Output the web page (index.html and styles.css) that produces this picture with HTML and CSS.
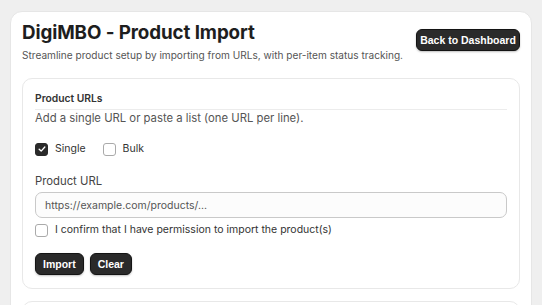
FILE: index.html
```html
<!DOCTYPE html>
<html>
<head>
    <meta charset="UTF-8">
    <title>DigiMBO - Product Import</title>
    <link rel="stylesheet" href="styles.css">
</head>
<body>
	<div class="page">
		<div class="header">
			<div class="titles">
				<h1>DigiMBO - Product Import</h1>
				<p class="sub">Streamline product setup by importing from URLs, with per-item status tracking.</p>
			</div>
			<button class="btn btn-back">Back to Dashboard</button>
		</div>
		<div class="panel">
			<div class="panel-title">Product URLs</div>
			<p class="hint">Add a single URL or paste a list (one URL per line).</p>
			<div class="modes">
				<label class="check"><span class="box on"><svg viewBox="0 0 12 12" width="10" height="10"><path d="M2.6 6.2 L5 8.5 L9.4 3.6" fill="none" stroke="#fff" stroke-width="1.6" stroke-linecap="round" stroke-linejoin="round"/></svg></span>Single</label>
				<label class="check"><span class="box"></span>Bulk</label>
			</div>
			<div class="field-label">Product URL</div>
			<div class="input">https://example.com/products/...</div>
			<label class="check confirm"><span class="box"></span>I confirm that I have permission to import the product(s)</label>
			<div class="actions">
				<button class="btn">Import</button>
				<button class="btn">Clear</button>
			</div>
		</div>
		<div class="panel next"></div>
	</div>
</body>
</html>
```

FILE: styles.css
```css
*{
	padding: 0;
	margin: 0;
	box-sizing: border-box;
}
body{
	background: #efefef;
	font-family: Inter, "Noto Sans", sans-serif;
	color: #222;
	overflow: hidden;
}
.page{
	margin: 11px 10px 0 10px;
	width: 522px;
	background: #fff;
	border: 1px solid #e6e6e6;
	border-radius: 12px;
	padding: 9px 11px 40px 11px;
}
.header{
	display: flex;
	justify-content: space-between;
	align-items: flex-start;
}
h1{
	font-size: 18.8px;
	font-weight: 700;
	color: #1e1e1e;
	line-height: 24px;
	letter-spacing: -0.1px;
}
.sub{
	font-size: 10.1px;
	color: #555;
	margin-top: 3px;
	line-height: 14px;
}
.btn{
	font-family: "Liberation Sans", Arial, sans-serif;
	font-weight: 700;
	font-size: 10.5px;
	color: #fff;
	background: #2a2a2a;
	border: 1px solid #141414;
	border-radius: 6px;
	box-shadow: 0 1px 2px rgba(0,0,0,0.25);
	height: 22px;
	padding: 0 7px;
	cursor: pointer;
}
.btn-back{
	margin-top: 8px;
	width: 104px;
	padding: 0;
}
.panel{
	margin-top: 16px;
	border: 1px solid #e8e8e8;
	border-radius: 10px;
	padding: 13px 12px 13px 12px;
}
.panel-title{
	font-size: 10.3px;
	font-weight: 600;
	color: #333;
	line-height: 13px;
	padding-bottom: 4px;
	border-bottom: 1px solid #ececec;
}
.hint{
	font-size: 11.3px;
	color: #555;
	line-height: 15px;
	margin-top: 1px;
}
.modes{
	display: flex;
	gap: 17px;
	margin-top: 16px;
}
.check{
	display: flex;
	align-items: center;
	gap: 7px;
	font-size: 10.5px;
	color: #333;
	line-height: 14px;
}
.box{
	width: 13px;
	height: 13px;
	border: 1px solid #aaa;
	border-radius: 3px;
	background: #fff;
	display: flex;
	align-items: center;
	justify-content: center;
}
.box.on{
	background: #2a2a2a;
	border-color: #2a2a2a;
}
.field-label{
	font-size: 11.3px;
	color: #444;
	margin-top: 18px;
	line-height: 15px;
}
.input{
	margin-top: 3px;
	height: 26px;
	border: 1px solid #c9c9c9;
	border-radius: 7px;
	background: #fcfcfc;
	font-size: 10.5px;
	color: #555;
	padding: 0 9px;
	display: flex;
	align-items: center;
}
.confirm{
	margin-top: 5px;
}
.actions{
	display: flex;
	gap: 6px;
	margin-top: 16px;
}
.next{
	margin-top: 12px;
	height: 40px;
}
```
